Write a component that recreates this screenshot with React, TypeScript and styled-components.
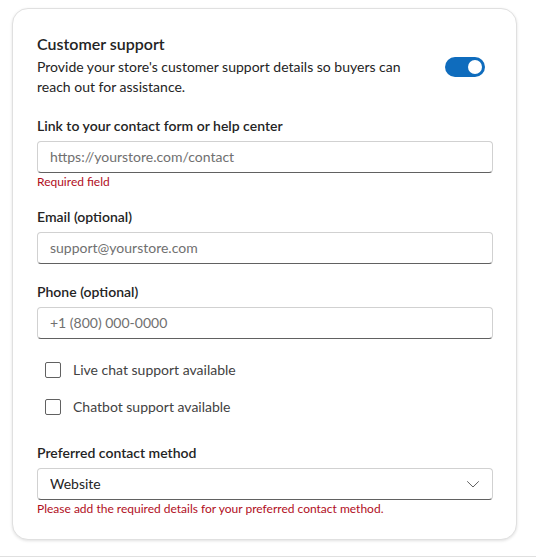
import React from "react";
import styled, { createGlobalStyle } from "styled-components";

const GlobalStyle = createGlobalStyle`
  * { box-sizing: border-box; }
  html, body { margin: 0; padding: 0; background: #ffffff; }
  body {
    font-family: "Segoe UI", Lato, "Open Sans", sans-serif;
    color: #242424;
    -webkit-font-smoothing: antialiased;
  }
`;

const Page = styled.div`
  width: 536px;
  height: 560px;
  padding: 8px 19px 0 12px;
  display: flex;
  flex-direction: column;
`;

const Card = styled.section`
  width: 505px;
  border: 1px solid #e0e0e0;
  border-radius: 16px;
  background: #ffffff;
  box-shadow: 0 1px 3px rgba(0, 0, 0, 0.12);
  padding: 24px 23px 22px 24px;
  display: flex;
  flex-direction: column;
`;

const Divider = styled.div`
  margin: 16px -19px 0 -12px;
  height: 1px;
  background: #e0e0e0;
`;

const Title = styled.h2`
  margin: 0;
  font-size: 16px;
  line-height: 22px;
  font-weight: 600;
  color: #242424;
`;

const HeaderRow = styled.div`
  margin-top: 2px;
  display: flex;
  align-items: flex-start;
  justify-content: space-between;
  gap: 24px;
`;

const Description = styled.p`
  margin: 0;
  width: 380px;
  font-size: 14px;
  line-height: 20px;
  color: #242424;
`;

const SwitchTrack = styled.button<{ $on: boolean }>`
  flex: none;
  margin: 0 8px 0 0;
  width: 40px;
  height: 20px;
  border-radius: 999px;
  border: none;
  padding: 0 3px;
  background: ${(p) => (p.$on ? "#0f6cbd" : "#ffffff")};
  display: flex;
  align-items: center;
  justify-content: ${(p) => (p.$on ? "flex-end" : "flex-start")};
  cursor: pointer;
`;

const SwitchThumb = styled.span`
  width: 14px;
  height: 14px;
  border-radius: 50%;
  background: #ffffff;
`;

const Field = styled.div<{ $mt: number }>`
  margin-top: ${(p) => p.$mt}px;
  display: flex;
  flex-direction: column;
`;

const Label = styled.label`
  font-size: 14px;
  line-height: 20px;
  font-weight: 600;
  color: #242424;
  margin-bottom: 5px;
`;

const InputBox = styled.span`
  height: 32px;
  display: flex;
  align-items: center;
  padding: 0 10px;
  border: 1px solid #d1d1d1;
  border-bottom-color: #616161;
  border-radius: 4px;
  background: #ffffff;
`;

const TextInput = styled.input`
  flex: 1;
  min-width: 0;
  border: none;
  outline: none;
  background: transparent;
  padding: 0 2px;
  font-family: inherit;
  font-size: 14px;
  line-height: 20px;
  color: #242424;
  &::placeholder {
    color: #707070;
  }
`;

const Select = styled.select`
  flex: 1;
  min-width: 0;
  appearance: none;
  border: none;
  outline: none;
  background: transparent;
  padding: 0 2px;
  font-family: inherit;
  font-size: 14px;
  line-height: 20px;
  color: #242424;
`;

const Hint = styled.div`
  margin-top: 1px;
  font-size: 12px;
  line-height: 16px;
  color: #b10e1c;
`;

const Checks = styled.div`
  margin-top: 12px;
  display: flex;
  flex-direction: column;
`;

const CheckRow = styled.label`
  height: 37px;
  display: flex;
  align-items: center;
  padding-left: 8px;
  gap: 12px;
  cursor: pointer;
`;

const CheckBox = styled.span`
  flex: none;
  width: 16px;
  height: 16px;
  border: 1px solid #616161;
  border-radius: 2px;
  background: #ffffff;
`;

const CheckText = styled.span`
  font-size: 14px;
  line-height: 20px;
  color: #424242;
`;

const Chevron = () => (
  <svg width="12" height="7" viewBox="0 0 12 7" fill="none" aria-hidden="true">
    <path d="M0.5 0.6L6 6L11.5 0.6" stroke="#616161" strokeWidth="1" strokeLinecap="round" strokeLinejoin="round" />
  </svg>
);

const ChevronSlot = styled.span`
  flex: none;
  display: flex;
  align-items: center;
  margin-right: 3px;
`;

export default function App() {
  return (
    <>
      <GlobalStyle />
      <Page>
        <Card>
          <Title>Customer support</Title>
          <HeaderRow>
            <Description>
              Provide your store's customer support details so buyers can reach out for assistance.
            </Description>
            <SwitchTrack $on={true} role="switch" aria-checked="true" aria-label="Customer support">
              <SwitchThumb />
            </SwitchTrack>
          </HeaderRow>

          <Field $mt={19}>
            <Label htmlFor="link">Link to your contact form or help center</Label>
            <InputBox>
              <TextInput id="link" placeholder="https://yourstore.com/contact" />
            </InputBox>
            <Hint>Required field</Hint>
          </Field>

          <Field $mt={17}>
            <Label htmlFor="email">Email (optional)</Label>
            <InputBox>
              <TextInput id="email" placeholder="support@yourstore.com" />
            </InputBox>
          </Field>

          <Field $mt={18}>
            <Label htmlFor="phone">Phone (optional)</Label>
            <InputBox>
              <TextInput id="phone" placeholder="+1 (800) 000-0000" />
            </InputBox>
          </Field>

          <Checks>
            <CheckRow>
              <CheckBox />
              <CheckText>Live chat support available</CheckText>
            </CheckRow>
            <CheckRow>
              <CheckBox />
              <CheckText>Chatbot support available</CheckText>
            </CheckRow>
          </Checks>

          <Field $mt={18}>
            <Label htmlFor="method">Preferred contact method</Label>
            <InputBox>
              <Select id="method" defaultValue="Website">
                <option>Website</option>
                <option>Email</option>
                <option>Phone</option>
              </Select>
              <ChevronSlot>
                <Chevron />
              </ChevronSlot>
            </InputBox>
            <Hint>Please add the required details for your preferred contact method.</Hint>
          </Field>
        </Card>
        <Divider />
      </Page>
    </>
  );
}
